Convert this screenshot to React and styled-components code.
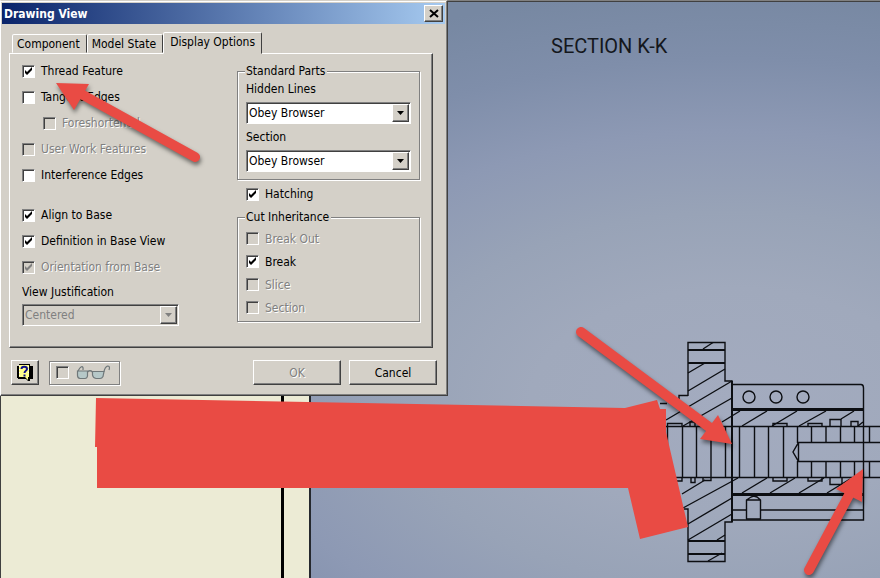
import React from 'react';
import styled, { createGlobalStyle, css } from 'styled-components';

const GlobalStyle = createGlobalStyle`
	* {
		box-sizing: border-box;
	}

	body {
		margin: 0;
		overflow: hidden;
		font-family: 'DejaVu Sans Condensed', 'Noto Sans', sans-serif;
		font-size: 12px;
		line-height: 16px;
		color: #000;
	}

	button,
	select,
	input {
		font: inherit;
		margin: 0;
	}
`;

const raised = css`
	border: 1px solid;
	border-color: #fff #404040 #404040 #fff;
	box-shadow: inset -1px -1px 0 #808080;
	background: #d4d0c8;
`;

const sunken = css`
	border: 1px solid;
	border-color: #808080 #fff #fff #808080;
	box-shadow: inset 1px 1px 0 #404040;
`;

const disabledText = css`
	color: #808080;
	text-shadow: 1px 1px 0 #fff;
`;

const Workspace = styled.main`
	position: relative;
	display: flex;
	min-height: 100vh;
	overflow: hidden;
`;

const Sheet = styled.div`
	display: flex;
	justify-content: flex-end;
	flex: 0 0 311px;
	background: #ecebd5;
	border-left: 1px solid #404040;
	border-right: 2px solid #25282e;
`;

const SheetBorder = styled.div`
	width: 28px;
	border-left: 3px solid #000;
`;

const Viewport = styled.section`
	flex: 1;
	display: flex;
	flex-direction: column;
	border-top: 1px solid #808080;
	box-shadow: inset 0 1px 0 #404040;
	background: radial-gradient(
		ellipse 800px 450px at 420px 400px,
		#a3abbf 0%,
		#a0a9bc 25%,
		#98a3b7 42%,
		#8d99b4 60%,
		#7f8eaa 76%,
		#7788a2 92%
	);
`;

const SectionTitle = styled.h1`
	margin: 31px 0 0 240px;
	font: 20px/28px Roboto, 'Liberation Sans', sans-serif;
	color: #14171c;
`;

const Drawing = styled.svg`
	display: block;
	align-self: flex-end;
	width: 220px;
	height: 240px;
	margin-top: 270px;
	fill: none;
	stroke: #0c0e12;
	stroke-width: 1.4;
`;

const Markup = styled.svg`
	position: absolute;
	top: 0;
	left: 0;
	width: 880px;
	height: 578px;
	pointer-events: none;
	fill: #e94b44;
`;

const Arrow = styled.g`
	filter: drop-shadow(1px 3px 2px rgba(0, 0, 0, 0.5));
	stroke-linecap: round;

	line {
		stroke: #e94b44;
		stroke-width: 10;
	}
`;

const Dialog = styled.form`
	position: absolute;
	top: 0;
	left: 0;
	width: 448px;
	padding: 1px 0 10px 1px;
	background: #d4d0c8;
	border: 1px solid;
	border-color: #d4d0c8 #404040 #404040 #fff;
	box-shadow: inset -1px -1px 0 #808080, inset 0 1px 0 #fff;
`;

const TitleBar = styled.header`
	display: flex;
	align-items: center;
	justify-content: space-between;
	height: 21px;
	margin: 1px 2px 0 0;
	padding: 0 2px;
	background: linear-gradient(to right, #0a246a, #a6caf0);
`;

const DialogTitle = styled.h2`
	margin: 0;
	font-size: 12px;
	font-weight: bold;
	color: #fff;
`;

const CloseButton = styled.button`
	${raised}
	display: flex;
	align-items: center;
	justify-content: center;
	width: 19px;
	height: 17px;
	padding: 0;
`;

const TabList = styled.div`
	display: flex;
	align-items: flex-end;
	height: 29px;
	padding-left: 10px;
`;

const Tab = styled.button`
	height: ${({ $active }) => ($active ? 22 : 19)}px;
	padding: ${({ $active }) => ($active ? '0 6px 2px' : '0 6px 0 4px')};
	margin-bottom: ${({ $active }) => ($active ? '-1px' : '0')};
	z-index: ${({ $active }) => ($active ? 1 : 0)};
	color: #000;
	background: #d4d0c8;
	border: 1px solid;
	border-color: #fff #404040 transparent #fff;
	border-radius: 2px 2px 0 0;
	white-space: nowrap;
`;

const TabPanel = styled.div`
	display: flex;
	justify-content: space-between;
	height: 295px;
	margin: 0 14px 0 7px;
	padding: 4px 12px 0;
	border: 1px solid;
	border-color: #fff #404040 #404040 #fff;
	box-shadow: inset -1px -1px 0 #808080;
`;

const FieldLabel = styled.label`
	display: block;
	margin: 5px 0;
`;

const LeftColumn = styled.div`
	display: flex;
	flex-direction: column;
	width: 180px;

	${FieldLabel} {
		margin: 4px 0;
	}
`;

const RightColumn = styled.div`
	display: flex;
	flex-direction: column;
	width: 183px;
	padding-top: 8px;
`;

const OptionRow = styled.label`
	display: flex;
	align-items: center;
	gap: 6px;
	height: ${({ $compact }) => ($compact ? 23 : 26)}px;
	padding-left: ${({ $indent }) => ($indent ? 21 : 0)}px;
	white-space: nowrap;
	${({ $disabled }) => $disabled && disabledText}
`;

const BoxWrap = styled.span`
	position: relative;
	display: flex;
	width: 13px;
	height: 13px;
`;

const Box = styled.input`
	${sunken}
	appearance: none;
	width: 13px;
	height: 13px;
	background: #fff;

	&:disabled {
		background: #d4d0c8;
	}

	& + svg {
		position: absolute;
		inset: 0;
		display: none;
		fill: #000;
		pointer-events: none;
	}

	&:checked + svg {
		display: block;
	}

	&:disabled + svg {
		fill: #808080;
	}
`;

const OptionGap = styled.div`
	height: 14px;
`;

const SelectWrap = styled.div`
	position: relative;
	width: ${({ $width }) => $width}px;
`;

const SelectBox = styled.select`
	${sunken}
	display: block;
	appearance: none;
	width: 100%;
	height: 22px;
	padding: 0 20px 0 2px;
	color: #000;
	background: #fff;
	border-radius: 0;

	&:disabled {
		color: #808080;
		background: #d4d0c8;
		opacity: 1;
	}
`;

const SelectArrow = styled.span`
	${raised}
	position: absolute;
	top: 2px;
	right: 2px;
	display: flex;
	align-items: center;
	justify-content: center;
	width: 17px;
	height: 18px;
	pointer-events: none;
`;

const Group = styled.fieldset`
	min-width: 0;
	margin: 0;
	padding: 0 8px ${({ $bottom }) => $bottom}px;
	border: 1px solid #808080;
	box-shadow: inset 1px 1px 0 #fff, 1px 1px 0 #fff;
`;

const GroupLegend = styled.legend`
	padding: 0 2px 0 1px;
	margin-left: -1px;
	line-height: 10px;
	background: #d4d0c8;
`;

const GroupOptions = styled.div`
	padding-top: 5px;
`;

const HatchingRow = styled.div`
	padding: 1px 0 5px 9px;
`;

const Footer = styled.footer`
	display: flex;
	align-items: center;
	gap: 8px;
	margin: 12px 10px 0 9px;
`;

const PushButton = styled.button`
	${raised}
	width: 88px;
	height: 25px;
	padding: 0;
	color: #000;

	&:disabled {
		${disabledText}
	}
`;

const HelpButton = styled(PushButton)`
	display: flex;
	align-items: center;
	justify-content: center;
	width: 28px;
`;

const PreviewToggle = styled.label`
	display: flex;
	align-items: center;
	gap: 7px;
	width: 71px;
	height: 24px;
	margin: 0 auto 0 2px;
	padding-left: 6px;
	border: 1px solid #808080;
	box-shadow: inset 1px 1px 0 #fff, 1px 1px 0 #fff;
`;

const CheckInput = (props) => (
	<BoxWrap>
		<Box type="checkbox" {...props} />
		<svg width="13" height="13" viewBox="0 0 13 13">
			<path d="M3 5v3l2 2 5-5V2L5 7z" />
		</svg>
	</BoxWrap>
);

const Option = ({ label, checked, disabled, indent, compact }) => (
	<OptionRow $disabled={disabled} $indent={indent} $compact={compact}>
		<CheckInput defaultChecked={checked} disabled={disabled} />
		{label}
	</OptionRow>
);

const Select = ({ id, value, width, disabled }) => (
	<SelectWrap $width={width}>
		<SelectBox id={id} disabled={disabled}>
			<option>{value}</option>
		</SelectBox>
		<SelectArrow>
			<svg width="7" height="4" viewBox="0 0 7 4">
				<path d="M0 0h7L3.5 4z" fill={disabled ? '#808080' : '#000'} />
			</svg>
		</SelectArrow>
	</SelectWrap>
);

const HelpIcon = () => (
	<svg width="18" height="19" viewBox="0 0 18 19">
		<path d="M3 1h11v2h3v13h-3v2h-2l-2-2H2v-1H1V3h2z" fill="#000" />
		<path d="M3 2h10v12h-1v3l-3-3H3z" fill="#ffff8c" />
		<path d="M3 3h1v1H3zM3 6h1v1H3zM3 9h1v1H3zM3 12h1v1H3zM12 3h1v1h-1zM12 6h1v1h-1zM12 9h1v1h-1z" fill="#fff" />
		<path d="M5.500 6C5.500 3 11 3 11 6C11 8 8.500 7.500 8.500 10M8.500 11.500V13.500" fill="none" stroke="#10108c" strokeWidth="2" />
	</svg>
);

const GlassesIcon = () => (
	<svg width="36" height="17" viewBox="0 0 36 17" fill="none" stroke="#70787a" strokeWidth="1.2">
		<path d="M1.500 7H11.500V12Q11 14.500 9 14.500H4Q1.500 14 1.500 11.500zM16.500 7.500H28L27 12.500Q26 14.500 24 14.500H20Q17 14 16.500 11z" fill="#b6c8c8" />
		<path d="M11.500 8Q14 5.500 16.500 8M2 7Q4 3 6 2.500Q7.500 3 7 6M28 7.500Q29 3 31.500 2Q34.500 2 33 6" />
	</svg>
);

const SectionDrawing = () => (
	<Drawing viewBox="660 330 220 240" aria-hidden="true">
		<path d="M688 396V342.500H725V381H732V522H725V561.500H688V509H684M688 395.500H679V400M658 403.500H667" />
		<path d="M688 350H725M688 363H725M688 541H725M688 554H725" strokeWidth="2" />
		<path d="M703 349L713 342.500M688 373L705 363M688 391L725 369M666 420L732 381M683 426L732 398M722 422L740 411M682 494L705 480M683 508L738 478M688 524L732 498M688 540L732 514M717 540L725 535M708 561L722 553" />
		<path d="M732 384.500H861Q863.500 384.500 863.500 388V520H732M732 510H746M760 510H863" />
		<path d="M732 409.500H864M732 494.500H864" strokeWidth="3" />
		<circle cx="749" cy="397" r="6" />
		<circle cx="776" cy="397" r="6" />
		<circle cx="803" cy="397" r="6" />
		<path d="M742 426L767 411M772 426L797 411M799 426L826 411M841 419L854 411M858 426L863 422M742 493L767 478M770 493L795 478M799 493L824 478M827 493L850 479" />
		<path d="M666 426.500H880M666 477.500H880" />
		<path d="M667.500 427V477M682.500 427V477M696.500 427V477M711 427V477M725.500 427V477M739.500 427V477M754.500 427V477M768.500 427V477M783.500 427V477M797.500 427V443M797.500 461V477" />
		<path d="M732 381V522" strokeWidth="2" />
		<path d="M811.500 427V443M826 427V443M840.500 427V443M854.500 427V443M869.500 427V443M811.500 461V477M826 461V477M840.500 461V477M854.500 461V477M869.500 461V477" />
		<path d="M880 442.500H798.500L793 452L798.500 461.500H880M798.500 442.500V461.500" />
		<path d="M667.500 426V423.500H682V426M773 426V423.500H787V426M808 426V423.500H822V426M830 426V419.500H841V426M851 426V421.500H858V426M690 426V422H695V426M673 478V481H682V478M691 478V482.500H695V478M703 478V480.500H711V478M773 478V481H787V478M808 478V481H822V478M830 478V484.500H842V478" />
		<path d="M746.500 519V500L751 497L753.500 496L757 497L760.500 500V519M746 500H761M746 519H761" />
	</Drawing>
);

const Annotations = () => (
	<Markup aria-hidden="true">
		<path d="M96 398L625 408L657 400L660 409H666V432L688 527L640 539L628 488L97 488V447H95z" />
		<Arrow>
			<line x1="83" y1="95" x2="195" y2="157" />
			<path d="M56 83L89 84L74 110z" />
		</Arrow>
		<Arrow>
			<line x1="581" y1="332" x2="709" y2="427" />
			<path d="M732 444L718 415L700 439z" />
		</Arrow>
		<Arrow>
			<line x1="809" y1="570" x2="849" y2="495" />
			<path d="M863 469L836 489L862 502z" />
		</Arrow>
	</Markup>
);

const App = () => {
	return (
		<>
			<GlobalStyle />
			<Workspace>
				<Sheet>
					<SheetBorder />
				</Sheet>
				<Viewport>
					<SectionTitle>SECTION K-K</SectionTitle>
					<SectionDrawing />
				</Viewport>
				<Dialog>
					<TitleBar>
						<DialogTitle>Drawing View</DialogTitle>
						<CloseButton type="button" aria-label="Close">
							<svg width="10" height="9" viewBox="0 0 10 9" stroke="#000" strokeWidth="2">
								<path d="M1 1l8 7M9 1L1 8" />
							</svg>
						</CloseButton>
					</TitleBar>
					<TabList role="tablist">
						<Tab type="button" role="tab">Component</Tab>
						<Tab type="button" role="tab">Model State</Tab>
						<Tab type="button" role="tab" aria-selected="true" $active>Display Options</Tab>
					</TabList>
					<TabPanel role="tabpanel">
						<LeftColumn>
							<Option label="Thread Feature" checked />
							<Option label="Tangent Edges" />
							<Option label="Foreshortened" disabled indent />
							<Option label="User Work Features" disabled />
							<Option label="Interference Edges" />
							<OptionGap />
							<Option label="Align to Base" checked />
							<Option label="Definition in Base View" checked />
							<Option label="Orientation from Base" checked disabled />
							<FieldLabel htmlFor="justification">View Justification</FieldLabel>
							<Select id="justification" value="Centered" width={157} disabled />
						</LeftColumn>
						<RightColumn>
							<Group $bottom={7}>
								<GroupLegend>Standard Parts</GroupLegend>
								<FieldLabel htmlFor="hidden-lines">Hidden Lines</FieldLabel>
								<Select id="hidden-lines" value="Obey Browser" width={165} />
								<FieldLabel htmlFor="section">Section</FieldLabel>
								<Select id="section" value="Obey Browser" width={165} />
							</Group>
							<HatchingRow>
								<Option label="Hatching" checked />
							</HatchingRow>
							<Group $bottom={2}>
								<GroupLegend>Cut Inheritance</GroupLegend>
								<GroupOptions>
									<Option label="Break Out" disabled compact />
									<Option label="Break" checked compact />
									<Option label="Slice" disabled compact />
									<Option label="Section" disabled compact />
								</GroupOptions>
							</Group>
						</RightColumn>
					</TabPanel>
					<Footer>
						<HelpButton type="button" aria-label="Help">
							<HelpIcon />
						</HelpButton>
						<PreviewToggle aria-label="Preview">
							<CheckInput disabled aria-label="Preview" />
							<GlassesIcon />
						</PreviewToggle>
						<PushButton type="button" disabled>OK</PushButton>
						<PushButton type="button">Cancel</PushButton>
					</Footer>
				</Dialog>
				<Annotations />
			</Workspace>
		</>
	);
};

export default App;
